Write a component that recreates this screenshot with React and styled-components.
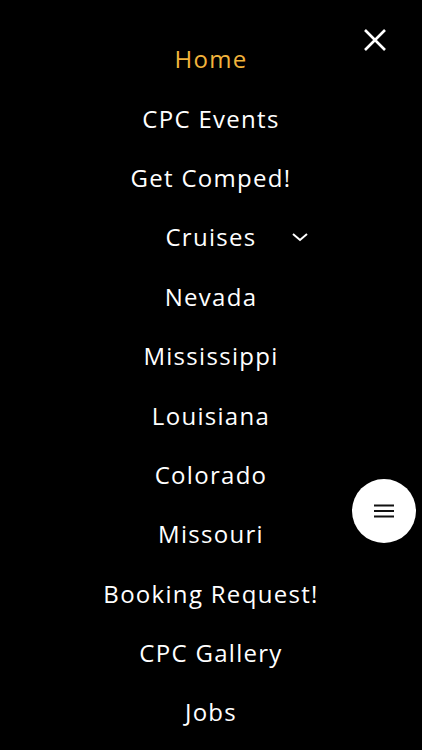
import React from "react";
import styled, { createGlobalStyle } from "styled-components";

const Global = createGlobalStyle`
  html, body { margin: 0; padding: 0; background: #000; }
  body { font-family: "Open Sans", "Liberation Sans", sans-serif; }
`;

const Page = styled.div`
  position: relative;
  width: 422px;
  height: 750px;
  background: #000;
  overflow: hidden;
`;

const Menu = styled.nav`
  display: flex;
  flex-direction: column;
  align-items: center;
  padding-top: 29px;
`;

const Item = styled.div`
  height: 59.4px;
  display: flex;
  align-items: center;
  justify-content: center;
  position: relative;
  font-size: 24px;
  font-weight: 400;
  letter-spacing: 1.3px;
  color: ${(p) => (p.$active ? "#f2b43c" : "#fff")};
`;

const Chevron = styled.span`
  position: absolute;
  left: calc(100% + 34px);
  top: 50%;
  transform: translateY(-50%);
  display: flex;
`;

const Close = styled.button`
  position: absolute;
  top: 28px;
  right: 35px;
  width: 24px;
  height: 24px;
  padding: 0;
  border: none;
  background: none;
  display: flex;
`;

const Fab = styled.button`
  position: absolute;
  left: 352px;
  top: 479px;
  width: 64px;
  height: 64px;
  border-radius: 50%;
  border: none;
  background: #fff;
  display: flex;
  align-items: center;
  justify-content: center;
  padding: 0;
`;

const items = [
  "Home",
  "CPC Events",
  "Get Comped!",
  "Cruises",
  "Nevada",
  "Mississippi",
  "Louisiana",
  "Colorado",
  "Missouri",
  "Booking Request!",
  "CPC Gallery",
  "Jobs",
];

export default function App() {
  return (
    <Page>
      <Global />
      <Menu>
        {items.map((t, i) => (
          <Item key={t} $active={i === 0}>
            {t}
            {t === "Cruises" && (
              <Chevron>
                <svg width="18" height="10" viewBox="0 0 18 10">
                  <path d="M2 2 L9 8 L16 2" fill="none" stroke="#fff" strokeWidth="2" />
                </svg>
              </Chevron>
            )}
          </Item>
        ))}
      </Menu>
      <Close aria-label="close">
        <svg width="24" height="24" viewBox="0 0 24 24">
          <path d="M2 2 L22 22 M22 2 L2 22" stroke="#fff" strokeWidth="2.6" />
        </svg>
      </Close>
      <Fab aria-label="menu">
        <svg width="20" height="14" viewBox="0 0 20 14">
          <path d="M0 1.5 H20 M0 7 H20 M0 12.5 H20" stroke="#111" strokeWidth="1.8" />
        </svg>
      </Fab>
    </Page>
  );
}
